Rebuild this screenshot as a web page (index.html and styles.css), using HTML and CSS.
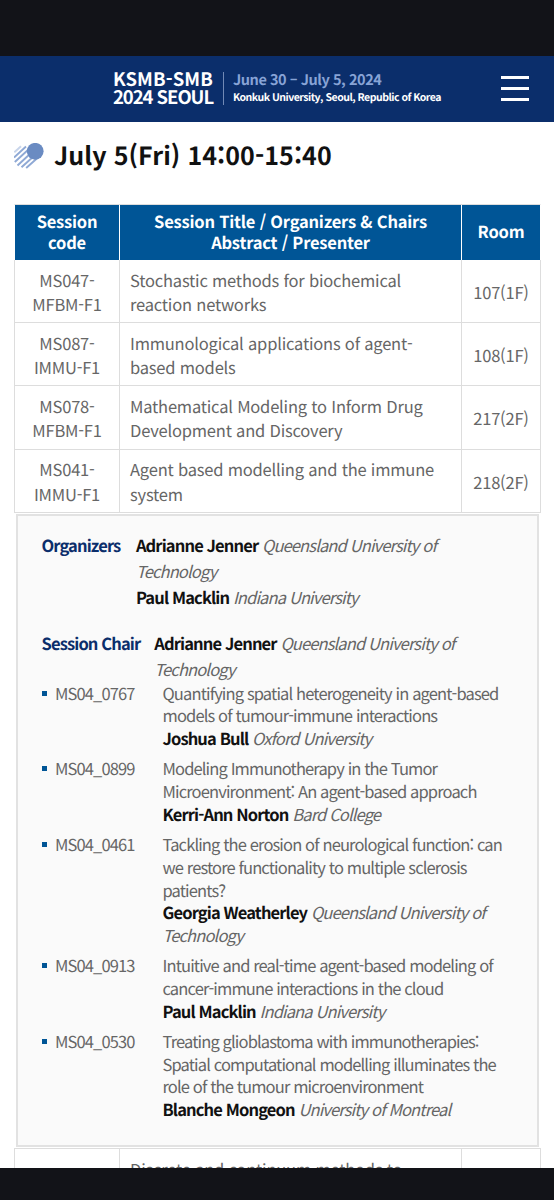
FILE: index.html
```html
<!DOCTYPE html>
<html lang="ko">
<head>
<meta charset="utf-8">
<title>KSMB-SMB 2024 Seoul</title>
<link rel="stylesheet" href="styles.css">
</head>
<body>
<div class="screen">
  <div class="status-bar"></div>
  <header class="site-header">
    <div class="brand"><span class="brand-top">KSMB-SMB</span><span class="brand-bottom">2024 SEOUL</span></div>
    <div class="event"><span class="event-date">June 30 – July 5, 2024</span><span class="event-place">Konkuk University, Seoul, Republic of Korea</span></div>
    <div class="menu"><i></i><i></i><i></i></div>
  </header>
  <main class="content">
    <h1 class="page-title">
      <svg class="title-icon" width="30" height="27" viewBox="0 0 30 27">
        <g stroke="#8fa9d5" stroke-width="1.900" fill="none">
          <path stroke-opacity=".5" d="M0.300 9.300L7 3.200"/>
          <path d="M0 14.500L12 3.500M0.800 19L15 6M3.500 22.500L17 10M7.500 24.300L20 13M12.200 25L24 14.500"/>
        </g>
        <circle cx="21.200" cy="8.300" r="8.400" fill="#6a8bc2"/>
      </svg>
      <span>July 5(Fri) 14:00-15:40</span>
    </h1>
    <div class="row head"><div class="code">Session<br>code</div><div class="title">Session Title / Organizers &amp; Chairs<br>Abstract / Presenter</div><div class="room">Room</div></div>
    <div class="row"><div class="code">MS047-<br>MFBM-F1</div><div class="title">Stochastic methods for biochemical<br>reaction networks</div><div class="room">107(1F)</div></div>
    <div class="row"><div class="code">MS087-<br>IMMU-F1</div><div class="title">Immunological applications of agent-<br>based models</div><div class="room">108(1F)</div></div>
    <div class="row"><div class="code">MS078-<br>MFBM-F1</div><div class="title">Mathematical Modeling to Inform Drug<br>Development and Discovery</div><div class="room">217(2F)</div></div>
    <div class="row"><div class="code">MS041-<br>IMMU-F1</div><div class="title">Agent based modelling and the immune<br>system</div><div class="room">218(2F)</div></div>
    <section class="detail">
      <div class="people organizers"><b class="label">Organizers</b><div><b>Adrianne Jenner</b> <em>Queensland University of<br>Technology</em><br><b>Paul Macklin</b> <em>Indiana University</em></div></div>
      <div class="people chair"><b class="label">Session Chair</b><div><b>Adrianne Jenner</b> <em>Queensland University of<br>Technology</em></div></div>
      <ul class="talks">
        <li><span class="talk-id">MS04_0767</span><div>Quantifying spatial heterogeneity in agent-based<br>models of tumour-immune interactions<br><b>Joshua Bull</b> <em>Oxford University</em></div></li>
        <li><span class="talk-id">MS04_0899</span><div>Modeling Immunotherapy in the Tumor<br>Microenvironment: An agent-based approach<br><b>Kerri-Ann Norton</b> <em>Bard College</em></div></li>
        <li><span class="talk-id">MS04_0461</span><div>Tackling the erosion of neurological function: can<br>we restore functionality to multiple sclerosis<br>patients?<br><b>Georgia Weatherley</b> <em>Queensland University of<br>Technology</em></div></li>
        <li><span class="talk-id">MS04_0913</span><div>Intuitive and real-time agent-based modeling of<br>cancer-immune interactions in the cloud<br><b>Paul Macklin</b> <em>Indiana University</em></div></li>
        <li><span class="talk-id">MS04_0530</span><div>Treating glioblastoma with immunotherapies:<br>Spatial computational modelling illuminates the<br>role of the tumour microenvironment<br><b>Blanche Mongeon</b> <em>University of Montreal</em></div></li>
      </ul>
    </section>
    <div class="row next"><div class="code"></div><div class="title">Discrete and continuum methods to</div><div class="room"></div></div>
  </main>
  <div class="nav-bar"></div>
</div>
</body>
</html>
```
FILE: styles.css
```css
* { box-sizing: border-box; }
body { margin: 0; background: #fff; color: #666; font: 16.5px/24.3px "Noto Sans CJK KR", sans-serif; letter-spacing: -0.2px; white-space: nowrap; text-rendering: geometricPrecision; }
.screen { height: 1200px; display: flex; flex-direction: column; overflow: hidden; }
.status-bar { height: 56px; background: #121318; flex: none; }
.nav-bar { height: 32px; background: #121318; flex: none; }
.site-header { height: 66px; flex: none; background: #0b2e6b; color: #fff; display: flex; align-items: center; padding: 0 25px 2px 113px; font-weight: 700; }
.brand { display: flex; flex-direction: column; width: 111px; border-right: 1px solid #7189b5; height: 33px; line-height: 18.500px; font-size: 18.500px; justify-content: center; }
.brand-top { letter-spacing: 0.1px; }
.brand-bottom { letter-spacing: -1.050px; }
.event { display: flex; flex-direction: column; padding-left: 9px; }
.event-date { color: #87a3d6; font-size: 14.5px; line-height: 18px; letter-spacing: -0.45px; }
.event-place { font-size: 10.5px; line-height: 17px; letter-spacing: -0.5px; }
.menu { margin-left: auto; width: 28px; display: flex; flex-direction: column; gap: 8px; padding-top: 1px; }
.menu i { height: 3px; background: #fff; }
.content { height: 1046px; flex: none; overflow: hidden; padding: 0 13.500px 0 14px; }
.page-title { display: flex; align-items: flex-start; gap: 10px; height: 82px; margin: 0; padding-top: 20px; color: #111; font-size: 25px; line-height: 26px; font-weight: 700; letter-spacing: 0.070px; }
.title-icon { flex: none; margin-top: 1px; }
.row { display: grid; grid-template-columns: 104px 342px 79px; height: 63.200px; border: 1px solid #ddd; border-top: 0; width: 527px; }
.row > div { display: flex; align-items: center; padding-top: 2px; }
.row > div + div { border-left: 1px solid #ddd; }
.code, .room { justify-content: center; text-align: center; }
.title { padding-left: 10px; }
.head { height: 56px; background: #005596; color: #fff; font-weight: 700; line-height: 21px; border: 1px solid #fff; border-top: 1px solid #ddd; border-bottom: 0; }
.head > div { padding-top: 0; padding-bottom: 2px; }
.head > div + div { border-left-color: #fff; }
.head .title { justify-content: center; text-align: center; padding-left: 0; }
.detail { width: 523px; height: 633px; margin: 1px 0 0 2px; border: 2px solid #e2e2e2; background: #fafafa; padding: 16px 0 0 23.500px; letter-spacing: -0.870px; }
.detail b { color: #111; font-weight: 700; }
.people { display: flex; line-height: 26px; }
.detail .label { color: #0b2e6b; }
.organizers { gap: 15.500px; margin-bottom: 20px; }
.chair { gap: 14px; }
.talks { list-style: none; margin: 0; padding: 0; line-height: 22.700px; }
.talks li { display: grid; grid-template-columns: 5px 8.500px 107.500px 1fr; margin-bottom: 7.600px; }
.talks li::before { content: ""; width: 5px; height: 5px; margin-top: 9px; background: #005596; }
.talk-id { grid-column: 3; }
.next { border-top: 1px solid #ddd; margin-top: 1px; }
.next > div { align-items: flex-start; padding-top: 8px; }
```
